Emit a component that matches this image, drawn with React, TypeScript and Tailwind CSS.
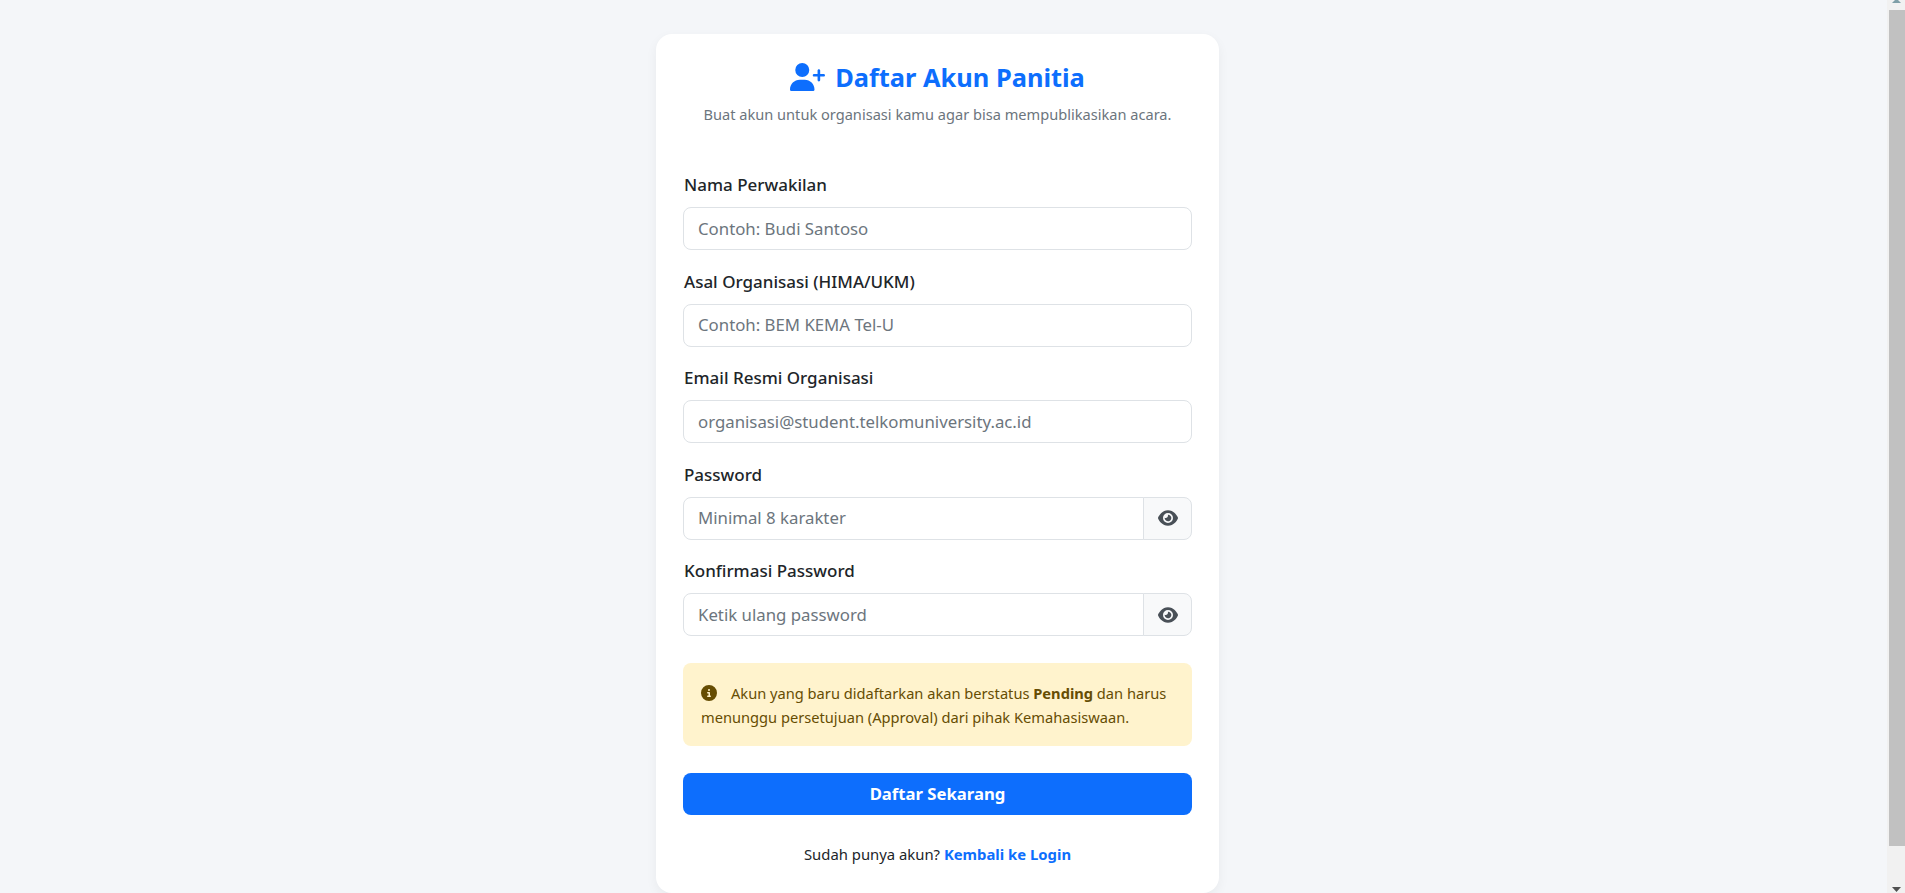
import { FaCircleInfo, FaEye, FaUserPlus } from "react-icons/fa6"

const FIELDS = [
  { label: "Nama Perwakilan", placeholder: "Contoh: Budi Santoso" },
  { label: "Asal Organisasi (HIMA/UKM)", placeholder: "Contoh: BEM KEMA Tel-U" },
  { label: "Email Resmi Organisasi", placeholder: "organisasi@student.telkomuniversity.ac.id" },
  { label: "Password", placeholder: "Minimal 8 karakter", toggle: true },
  { label: "Konfirmasi Password", placeholder: "Ketik ulang password", toggle: true },
]

function Scrollbar() {
  return (
    <div className="flex h-full w-[18px] shrink-0 flex-col items-end bg-[#f1f1f1]">
      <div className="flex h-[10px] w-full justify-center pl-px">
        <svg viewBox="0 0 9 3" className="h-[3px] w-[9px] text-[#7f9fa8]">
          <polygon points="3,0 6,0 9,3 0,3" fill="currentColor" />
        </svg>
      </div>
      <div className="h-[836px] w-4 bg-[#c1c1c1]" />
      <div className="flex h-[47px] w-full items-end justify-center pb-px pl-px">
        <svg viewBox="0 0 9 5" className="h-[5px] w-[9px] text-[#505050]">
          <polygon points="0,0 9,0 4.5,5" fill="currentColor" />
        </svg>
      </div>
    </div>
  )
}

export default function App() {
  return (
    <div className="flex h-[893px] overflow-hidden bg-[#f4f6f9] font-['Noto_Sans',sans-serif]">
      <main className="flex flex-1 justify-center pt-[34px] pr-3">
        <div className="h-[859px] w-[563px] shrink-0 rounded-2xl bg-white px-[27px] pt-[25px] shadow-[0_4px_12px_rgba(0,0,0,0.05)]">
          <div className="flex h-[36px] items-center justify-center gap-[10px] text-[#0d6efd]">
            <FaUserPlus className="h-7 w-[35px]" />
            <h1 className="text-[25.4px] leading-9 font-bold">Daftar Akun Panitia</h1>
          </div>
          <p className="mt-[7px] text-center text-[14.6px] leading-6 text-[#6c757d]">
            Buat akun untuk organisasi kamu agar bisa mempublikasikan acara.
          </p>
          <form className="mt-[44px] flex flex-col gap-[16.5px]">
            {FIELDS.map(({ label, placeholder, toggle }) => (
              <div key={label}>
                <label className="mb-[7px] block pl-px text-[17px] leading-[30px] font-medium text-[#212529]">
                  {label}
                </label>
                <div className="flex h-[43px]">
                  <input
                    placeholder={placeholder}
                    className={`min-w-0 flex-1 border border-[#dee2e6] bg-white px-[14px] text-[16.8px] placeholder:text-[#6c757d] ${toggle ? "rounded-l-lg" : "rounded-lg"}`}
                  />
                  {toggle && (
                    <button
                      type="button"
                      className="-ml-px flex w-[49px] items-center justify-center rounded-r-lg border border-[#dee2e6] bg-[#f8f9fa] text-[#495057]"
                    >
                      <FaEye className="h-[18px] w-5" />
                    </button>
                  )}
                </div>
              </div>
            ))}
          </form>
          <div className="mt-[27px] h-[83px] rounded-lg bg-[#fff3cd] p-[18px] text-[14.65px] leading-6 text-[#664d03]">
            <FaCircleInfo className="mr-[14px] inline-block size-4 align-[-2px]" />
            Akun yang baru didaftarkan akan berstatus <b className="font-bold">Pending</b> dan harus menunggu
            persetujuan (Approval) dari pihak Kemahasiswaan.
          </div>
          <button
            type="button"
            className="mt-[27px] h-[42px] w-full rounded-lg bg-[#0d6efd] text-[16.7px] font-bold text-white"
          >
            Daftar Sekarang
          </button>
          <p className="mt-[27px] text-center text-[14.85px] leading-6 text-[#212529]">
            Sudah punya akun? <a className="font-bold text-[#0d6efd]">Kembali ke Login</a>
          </p>
        </div>
      </main>
      <Scrollbar />
    </div>
  )
}
